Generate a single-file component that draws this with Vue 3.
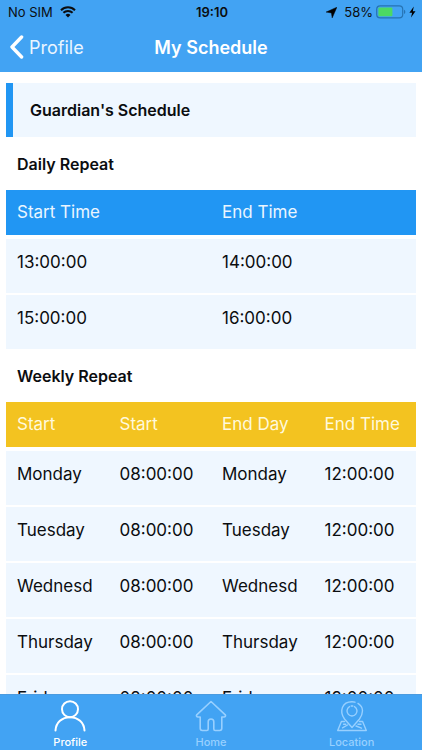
<template>
  <div class="screen">
    <header class="top">
      <div class="status-bar">
        <div class="status-side">
          <span>No SIM</span>
          <svg class="wifi" width="16" height="12" viewBox="0 0 16 12" aria-hidden="true">
            <path d="M1 4.2a10 10 0 0 1 14 0" />
            <path d="M3.4 6.8a6.6 6.6 0 0 1 9.2 0" />
            <path class="dot" d="M5.5 9a3.6 3.6 0 0 1 5 0L8 11.5z" />
          </svg>
        </div>
        <span class="clock">19:10</span>
        <div class="status-side right">
          <svg class="arrow" width="11" height="11" viewBox="0 0 11 11" aria-hidden="true">
            <path d="M10.9.2 6.200 10.900 5.400 5.900.1 5.100z" stroke="#0b0d10" stroke-width=".5" />
          </svg>
          <span>58%</span>
          <svg width="30" height="14" viewBox="0 0 30 14" aria-hidden="true">
            <rect x=".7" y=".9" width="26" height="12" rx="3.4" fill="none" stroke="#2673b3" stroke-width="1.2" />
            <rect x="2.4" y="2.6" width="14" height="8.6" rx="1" fill="#4cd964" />
            <path d="M28 4.8a2.3 2.3 0 0 1 0 4.200z" fill="#2673b3" />
          </svg>
          <svg width="7" height="12" viewBox="0 0 7 12" aria-hidden="true">
            <path d="M4.800.5.4 6.800h2.700L2 11.500l4.500-6.300H3.800z" />
          </svg>
        </div>
      </div>
      <nav class="nav-bar">
        <a href="#profile" class="back">
          <svg width="15" height="24" viewBox="0 0 15 24" aria-hidden="true">
            <path d="M12.600 2 3 12l9.600 10" />
          </svg>
          <span>Profile</span>
        </a>
        <h1>My Schedule</h1>
      </nav>
    </header>

    <main class="content">
      <h2 class="banner">Guardian's Schedule</h2>

      <h3>Daily Repeat</h3>
      <table class="daily">
        <thead>
          <tr>
            <th>Start Time</th>
            <th>End Time</th>
          </tr>
        </thead>
        <tbody>
          <tr v-for="item in daily" :key="item.start">
            <td>{{ item.start }}</td>
            <td>{{ item.end }}</td>
          </tr>
        </tbody>
      </table>

      <h3>Weekly Repeat</h3>
      <table class="weekly">
        <thead>
          <tr>
            <th>Start</th>
            <th>Start</th>
            <th>End Day</th>
            <th>End Time</th>
          </tr>
        </thead>
        <tbody>
          <tr v-for="day in weekly" :key="day">
            <td>{{ day }}</td>
            <td>08:00:00</td>
            <td>{{ day }}</td>
            <td>12:00:00</td>
          </tr>
        </tbody>
      </table>
    </main>

    <nav class="tab-bar">
      <button
        v-for="tab in tabs"
        :key="tab"
        type="button"
        :class="{ active: tab === activeTab }"
        @click="activeTab = tab"
      >
        <svg width="32" height="32" viewBox="0 0 32 32" aria-hidden="true">
          <g v-if="tab === 'Profile'" stroke-width="2">
            <circle cx="16" cy="9.200" r="8" />
            <path d="M1.500 30.500C2 22.500 8 17.200 16 17.200s14 5.300 14.500 13.300" />
          </g>
          <g v-else-if="tab === 'Home'" stroke-width="1.6">
            <path d="M16 1.500 1.700 14.800c-.7 1 .1 2.200 1.200 2.200h2.300v11.300c0 1.300.8 2.200 2.100 2.200h4.500c.9 0 1.400-.5 1.400-1.400v-7.300c0-1.700 1-2.800 2.800-2.800s2.800 1.100 2.800 2.800v7.300c0 .9.500 1.400 1.400 1.400h4.500c1.300 0 2.100-.9 2.100-2.200V17h2.300c1.100 0 1.900-1.200 1.200-2.200z" />
          </g>
          <g v-else stroke-width="1.4">
            <path d="M22 3.400C28.500 7.500 27 14 23.500 19L16 27.500 8.500 19C3 11.500 6 1.800 16 1.800c1 0 2 .1 2.900.4" />
            <path d="M18.500 6.600a5 5 0 1 1-5 0" />
            <path d="M15.200 6h1.600" />
            <path d="M8.600 21.500H5.400L1.700 30.500h28.600l-3.700-9h-3.200" />
            <path d="M6.500 27.800l5-2.800M7.500 24.300h2.200M22 24.300h3M20 26l5.500 2.200" />
          </g>
        </svg>
        <span>{{ tab }}</span>
      </button>
    </nav>
  </div>
</template>

<script setup>
import { ref } from 'vue';

const activeTab = ref('Profile');
const tabs = ['Profile', 'Home', 'Location'];

const daily = [
  { start: '13:00:00', end: '14:00:00' },
  { start: '15:00:00', end: '16:00:00' }
];

const weekly = ['Monday', 'Tuesday', 'Wednesd', 'Thursday', 'Friday'];
</script>

<style>
body {
  margin: 0;
}
</style>

<style scoped>
.screen {
  display: flex;
  flex-direction: column;
  height: 100vh;
  background: #fff;
  color: #0b0d10;
  font-family: Inter, "Liberation Sans", sans-serif;
}

.top {
  flex: none;
  background: #42a3f3;
}

.status-bar {
  display: flex;
  align-items: center;
  height: 24px;
  padding: 0 6px 0 8px;
  font-size: 13px;
}

.status-side {
  display: flex;
  flex: 1;
  align-items: center;
  gap: 7px;
}

.status-side.right {
  justify-content: flex-end;
  gap: 3px;
}

.clock {
  font-weight: 600;
}

.wifi {
  fill: none;
  stroke: #0b0d10;
  stroke-width: 2;
}

.wifi .dot {
  fill: #0b0d10;
  stroke: none;
}

.arrow {
  margin-right: 4px;
}

.nav-bar {
  display: grid;
  grid-template-columns: 1fr auto 1fr;
  align-items: center;
  height: 46px;
  padding: 0 9px 2px;
  color: #fff;
}

.back {
  display: flex;
  align-items: center;
  gap: 5px;
  color: #eaf5ff;
  font-size: 18px;
  text-decoration: none;
}

.back svg {
  fill: none;
  stroke: #fff;
  stroke-width: 3.4;
  stroke-linecap: round;
  stroke-linejoin: round;
}

h1 {
  margin: 0;
  font-size: 18px;
  font-weight: 600;
}

.content {
  flex: 1;
  min-height: 0;
  padding: 11px 6px 0;
  overflow-y: auto;
  scrollbar-width: none;
}

.banner {
  margin: 0;
  padding: 0 17px;
  border-left: 7px solid #2196f3;
  background: #eff7ff;
  font-size: 16px;
  font-weight: 600;
  line-height: 54px;
}

h3 {
  margin: 0;
  padding: 2px 11px 0;
  font-size: 16px;
  font-weight: 600;
  line-height: 51px;
}

table {
  width: 100%;
  table-layout: fixed;
  border-spacing: 0;
  font-size: 17px;
  line-height: 21px;
}

th {
  padding: 12px 0 12px 11px;
  border-bottom: 4px solid #fff;
  background: #2196f3;
  background-clip: padding-box;
  color: #eaf5ff;
  font-weight: 400;
  text-align: left;
  white-space: nowrap;
}

.weekly th {
  background-color: #f3c320;
  color: #fff9dc;
}

td {
  padding: 13px 0 20px 11px;
  border-bottom: 2px solid #fff;
  background: #eff7ff;
  background-clip: padding-box;
  white-space: nowrap;
}

.daily tbody tr:last-child td {
  border-bottom: 0;
}

.tab-bar {
  display: flex;
  flex: none;
  height: 55px;
  border-top: 1px solid #4a9be0;
  background: #42a3f3;
}

.tab-bar button {
  display: flex;
  flex: 1;
  flex-direction: column;
  align-items: center;
  gap: 3px;
  padding: 5px 0 0;
  border: 0;
  background: none;
  color: #98d0ff;
  font-family: inherit;
  font-size: 11px;
  font-weight: 500;
  line-height: 14px;
  cursor: pointer;
}

.tab-bar button.active {
  color: #fff;
}

.tab-bar svg {
  fill: none;
  stroke: currentColor;
  stroke-linecap: round;
  stroke-linejoin: round;
}
</style>
